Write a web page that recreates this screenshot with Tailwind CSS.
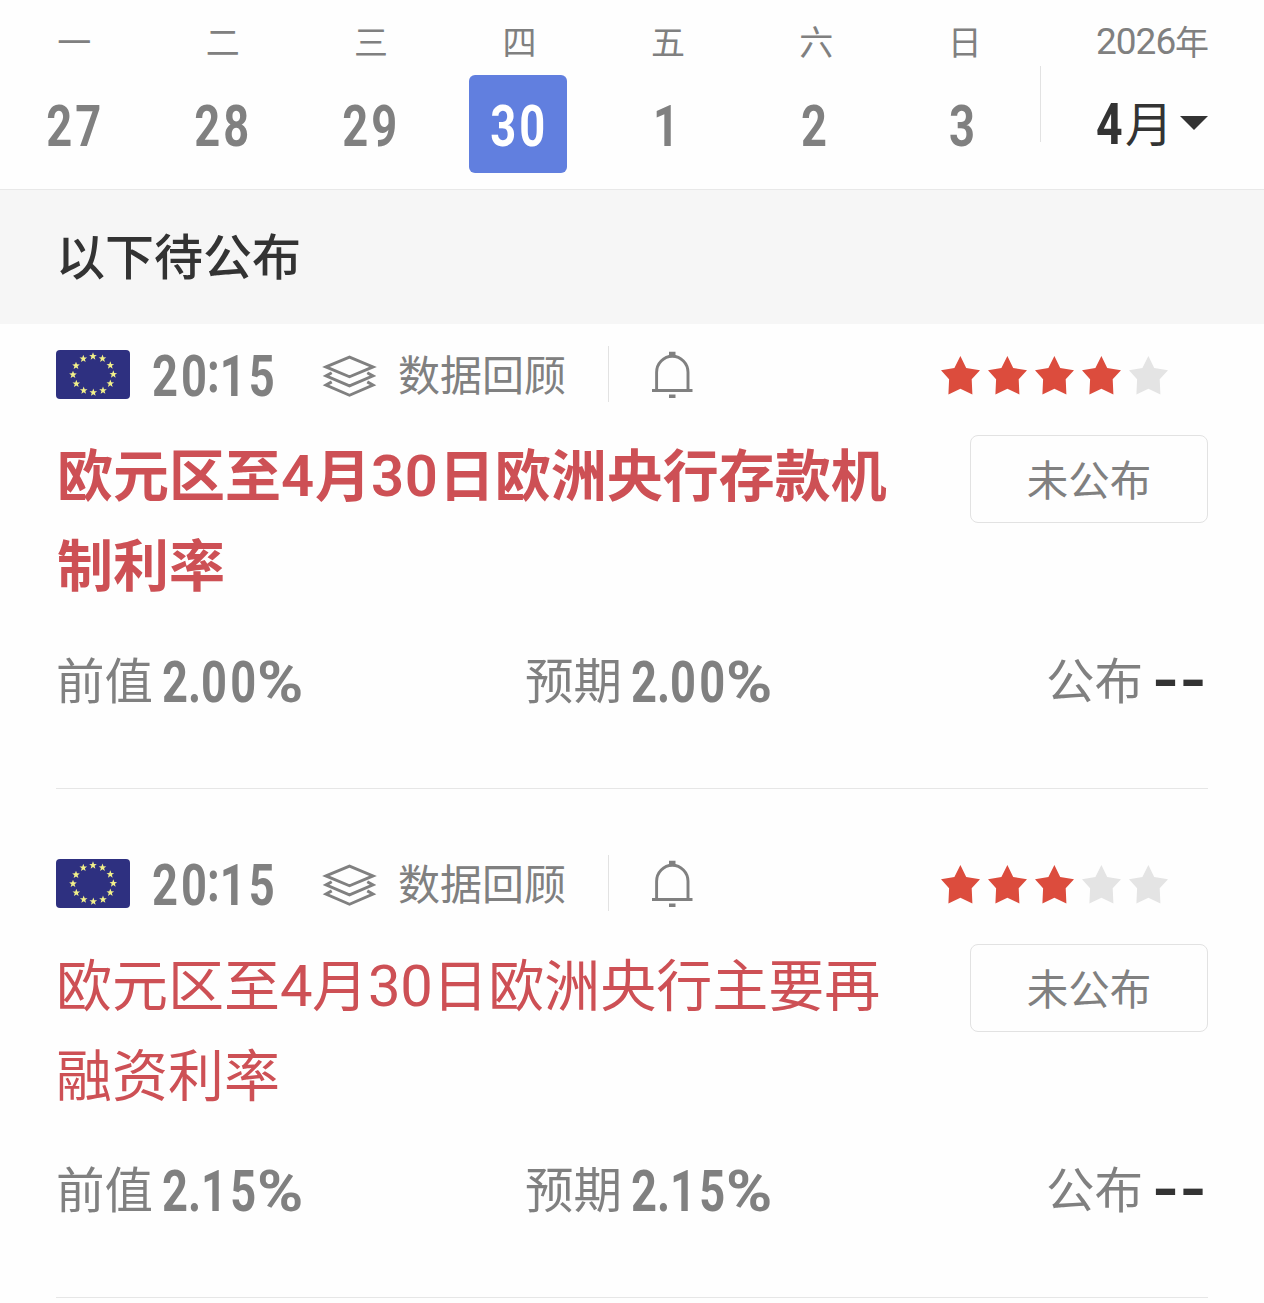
<!DOCTYPE html>
<html lang="zh-CN">
<head>
  <meta charset="UTF-8">
  <title>财经日历</title>
  <meta name="viewport" content="width=device-width, initial-scale=1.0">
  <script src="https://cdn.jsdelivr.net/npm/@tailwindcss/browser@4"></script>
</head>
<body class="bg-[#fefefe] text-[#808080] font-['Noto_Sans_CJK_SC',sans-serif]">

  <!-- Shared icons -->
  <svg class="hidden">
    <symbol id="star" viewBox="0 0 39 39">
      <path fill="currentColor" d="M19.4 0l5.8 12 13.8 2.3-8.3 8.9.7 15.2-12-5.6-12 5.6.7-15.2L0 14.3 13.4 12z"/>
    </symbol>
    <symbol id="layers" viewBox="0 0 54 44">
      <g fill="none" stroke="currentColor" stroke-width="2.8">
        <path d="M4.5 13.3L27 4l22.5 9.3L27 22.7z"/>
        <path d="M10 18.8L4.5 21.9 27 31.4l22.5-9.5-5.5-3.1"/>
        <path d="M10 27.6L4.5 30.7 27 40.4l22.5-9.7-5.5-3.1"/>
      </g>
    </symbol>
    <symbol id="bell" viewBox="0 0 44 48">
      <g fill="none" stroke="currentColor" stroke-width="2.9">
        <path d="M6.6 40.5V22.3a15.7 16 0 0 1 31.4 0v18.2"/>
        <path d="M2 40.5h40.5"/>
        <path d="M19 3.500h6.500M19 46.300h6.500" stroke-width="3.4"/>
      </g>
    </symbol>
    <symbol id="eu-star" viewBox="-4 -4 8 8">
      <path fill="#f2f08a" d="M0-3.500L.9-1.100l2.500.1-2 1.500.7 2.500L0 1.600-2.100 3l.7-2.500-2-1.500 2.500-.1z"/>
    </symbol>
    <symbol id="eu" viewBox="0 0 74 49">
      <rect width="74" height="49" rx="4" fill="#2e3080"/>
      <use href="#eu-star" x="32.5" y="1.8" width="9" height="9"/>
      <use href="#eu-star" x="42" y="4" width="9" height="9"/>
      <use href="#eu-star" x="49.8" y="10.8" width="9" height="9"/>
      <use href="#eu-star" x="52.8" y="19.8" width="9" height="9"/>
      <use href="#eu-star" x="49.8" y="29" width="9" height="9"/>
      <use href="#eu-star" x="42.5" y="35.9" width="9" height="9"/>
      <use href="#eu-star" x="32.8" y="37.9" width="9" height="9"/>
      <use href="#eu-star" x="23.2" y="35.9" width="9" height="9"/>
      <use href="#eu-star" x="15.8" y="29.2" width="9" height="9"/>
      <use href="#eu-star" x="12.5" y="20.1" width="9" height="9"/>
      <use href="#eu-star" x="15.5" y="11.1" width="9" height="9"/>
      <use href="#eu-star" x="22.8" y="4.2" width="9" height="9"/>
    </symbol>
  </svg>

  <!-- Week strip -->
  <header class="flex h-[190px] border-b border-[#e8e8e8]">
    <div class="w-[1039px] text-center">
      <div class="grid grid-cols-7 h-[75px] pt-[16px] text-[34px] leading-[50px]">
        <span>一</span>
        <span>二</span>
        <span>三</span>
        <span>四</span>
        <span>五</span>
        <span>六</span>
        <span>日</span>
      </div>
      <div class="grid grid-cols-7 justify-items-center w-[1036px] font-[Roboto] font-bold text-[58px] leading-[102px] tracking-[4px]">
        <div class="size-[98px] pl-[3px]"><span class="inline-block scale-x-78">27</span></div>
        <div class="size-[98px] pl-[3px]"><span class="inline-block scale-x-78">28</span></div>
        <div class="size-[98px] pl-[3px]"><span class="inline-block scale-x-78">29</span></div>
        <div class="size-[98px] pl-[3px] rounded-md bg-[#617fdf] text-white"><span class="inline-block scale-x-78">30</span></div>
        <div class="size-[98px] pl-[3px]"><span class="inline-block scale-x-78">1</span></div>
        <div class="size-[98px] pl-[3px]"><span class="inline-block scale-x-78">2</span></div>
        <div class="size-[98px] pl-[3px]"><span class="inline-block scale-x-78">3</span></div>
      </div>
    </div>
    <div class="w-px h-[76px] mt-[66px] ml-px bg-[#e2e2e2]"></div>
    <div class="ml-[55px] w-[113px]">
      <div class="h-[75px] pt-[16px] flex text-[34px] leading-[50px] whitespace-nowrap"><span class="w-[79px] pt-[1px] font-[Roboto] text-[37px] tracking-[-1px]">2026</span>年</div>
      <div class="flex items-center h-[98px] text-[#333]">
        <span class="w-[29px] font-[Roboto] font-bold text-[58px] leading-[98px]"><span class="inline-block origin-left scale-x-80">4</span></span>
        <span class="w-[46px] -mt-[6px] text-[48px] leading-[98px]">月</span>
        <svg class="w-[28px] h-[14px] ml-[9px] -mt-[2px]" viewBox="0 0 28 14"><path fill="currentColor" d="M0 0h28L14 14z"/></svg>
      </div>
    </div>
  </header>

  <h2 class="h-[134px] pl-[56px] bg-[#f6f6f6] text-[#333] text-[49px] leading-[127px] font-medium">以下待公布</h2>

  <main class="px-[56px]">

    <!-- Deposit facility rate -->
    <article class="pt-[26px] pb-[77px] border-b border-[#e6e6e6]">
      <div class="flex items-center h-[49px]">
        <svg class="w-[74px] h-[49px]"><use href="#eu"/></svg>
        <span class="w-[169px] ml-[22px] mt-[3px] font-[Roboto] font-bold text-[58px] leading-[49px] tracking-[4px]"><span class="inline-block origin-left scale-x-78">20<span class="relative -top-[4px] -mx-[4px]">:</span>15</span></span>
        <svg class="w-[57px] h-[46px] mt-[2px]"><use href="#layers"/></svg>
        <span class="ml-[20px] -mt-[5px] text-[42px] leading-[49px]">数据回顾</span>
        <span class="w-px h-[56px] ml-[42px] -mt-[2px] bg-[#e2e2e2]"></span>
        <svg class="w-[44px] h-[48px] ml-[41px] -mt-[2px]"><use href="#bell"/></svg>
        <div class="flex gap-[8px] ml-auto mr-[40px] mt-[1px] text-[#dc4c3d]">
          <svg class="size-[39px]"><use href="#star"/></svg>
          <svg class="size-[39px]"><use href="#star"/></svg>
          <svg class="size-[39px]"><use href="#star"/></svg>
          <svg class="size-[39px]"><use href="#star"/></svg>
          <svg class="size-[39px] text-[#e4e4e4]"><use href="#star"/></svg>
        </div>
      </div>
      <div class="flex justify-between h-[212px] mt-[32px] mb-[8px]">
        <h3 class="w-[840px] pt-[1px] pl-px text-[56px] leading-[90px] font-['Roboto','Noto_Sans_CJK_SC',sans-serif] font-bold text-[#cd5055]">欧元区至<span class="font-semibold text-[58px] leading-none tracking-[0.800px]">4</span>月<span class="font-semibold text-[58px] leading-none tracking-[0.800px]">30</span>日欧洲央行存款机制利率</h3>
        <div class="w-[238px] h-[88px] mt-[4px] rounded-lg border border-[#e2e2e2] text-center text-[41.500px] leading-[84px]">未公布</div>
      </div>
      <div class="flex h-[60px] text-[48.500px] leading-[54px]">
        <div class="flex w-[469px]">前值<span class="flex ml-[9px] font-[Roboto] font-bold text-[58px] leading-[62px]"><span class="w-[95px] tracking-[4px]"><span class="inline-block origin-left scale-x-78">2<span class="-mx-[4px]">.</span>00</span></span><span class="origin-left scale-x-108">%</span></span></div>
        <div class="flex">预期<span class="flex ml-[9px] font-[Roboto] font-bold text-[58px] leading-[62px]"><span class="w-[95px] tracking-[4px]"><span class="inline-block origin-left scale-x-78">2<span class="-mx-[4px]">.</span>00</span></span><span class="origin-left scale-x-108">%</span></span></div>
        <div class="flex ml-auto">公布<span class="w-[56px] ml-[9px] font-[Roboto] font-bold text-[58px] leading-[59px] text-[#333]"><span class="inline-block origin-left scale-x-120">--</span></span></div>
      </div>
    </article>

    <!-- Main refinancing rate -->
    <article class="pt-[70px] pb-[77px] border-b border-[#e6e6e6]">
      <div class="flex items-center h-[49px]">
        <svg class="w-[74px] h-[49px]"><use href="#eu"/></svg>
        <span class="w-[169px] ml-[22px] mt-[3px] font-[Roboto] font-bold text-[58px] leading-[49px] tracking-[4px]"><span class="inline-block origin-left scale-x-78">20<span class="relative -top-[4px] -mx-[4px]">:</span>15</span></span>
        <svg class="w-[57px] h-[46px] mt-[2px]"><use href="#layers"/></svg>
        <span class="ml-[20px] -mt-[5px] text-[42px] leading-[49px]">数据回顾</span>
        <span class="w-px h-[56px] ml-[42px] -mt-[2px] bg-[#e2e2e2]"></span>
        <svg class="w-[44px] h-[48px] ml-[41px] -mt-[2px]"><use href="#bell"/></svg>
        <div class="flex gap-[8px] ml-auto mr-[40px] mt-[1px] text-[#dc4c3d]">
          <svg class="size-[39px]"><use href="#star"/></svg>
          <svg class="size-[39px]"><use href="#star"/></svg>
          <svg class="size-[39px]"><use href="#star"/></svg>
          <svg class="size-[39px] text-[#e4e4e4]"><use href="#star"/></svg>
          <svg class="size-[39px] text-[#e4e4e4]"><use href="#star"/></svg>
        </div>
      </div>
      <div class="flex justify-between h-[212px] mt-[32px] mb-[8px]">
        <h3 class="w-[840px] pt-[2px] text-[56px] leading-[90px] font-['Roboto','Noto_Sans_CJK_SC',sans-serif] text-[#cd5055]">欧元区至<span class="text-[58px] leading-none tracking-[-0.500px]">4</span>月<span class="text-[58px] leading-none tracking-[-0.500px]">30</span>日欧洲央行主要再融资利率</h3>
        <div class="w-[238px] h-[88px] mt-[4px] rounded-lg border border-[#e2e2e2] text-center text-[41.500px] leading-[84px]">未公布</div>
      </div>
      <div class="flex h-[60px] text-[48.500px] leading-[54px]">
        <div class="flex w-[469px]">前值<span class="flex ml-[9px] font-[Roboto] font-bold text-[58px] leading-[62px]"><span class="w-[95px] tracking-[4px]"><span class="inline-block origin-left scale-x-78">2<span class="-mx-[4px]">.</span>15</span></span><span class="origin-left scale-x-108">%</span></span></div>
        <div class="flex">预期<span class="flex ml-[9px] font-[Roboto] font-bold text-[58px] leading-[62px]"><span class="w-[95px] tracking-[4px]"><span class="inline-block origin-left scale-x-78">2<span class="-mx-[4px]">.</span>15</span></span><span class="origin-left scale-x-108">%</span></span></div>
        <div class="flex ml-auto">公布<span class="w-[56px] ml-[9px] font-[Roboto] font-bold text-[58px] leading-[59px] text-[#333]"><span class="inline-block origin-left scale-x-120">--</span></span></div>
      </div>
    </article>

  </main>

</body>
</html>
